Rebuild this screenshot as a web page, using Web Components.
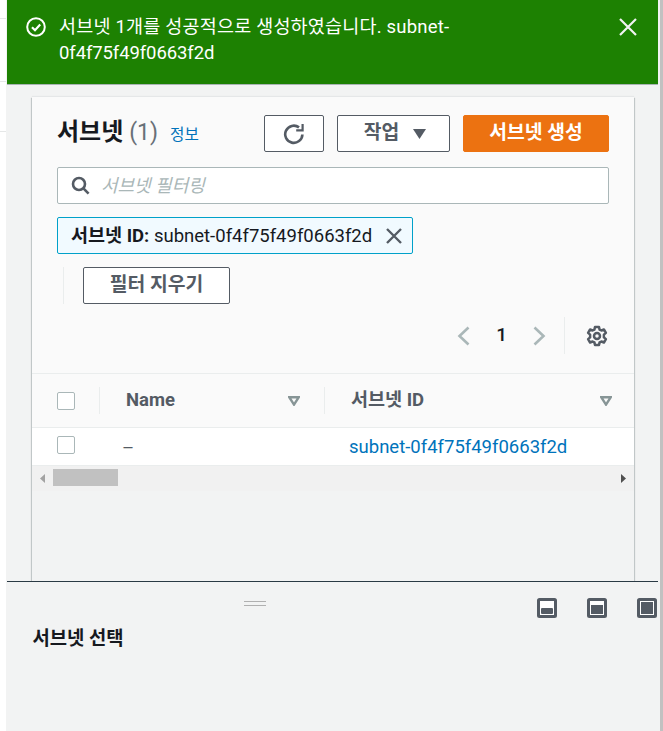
<!DOCTYPE html>
<html lang="ko">
<head>
<meta charset="utf-8">
<style>
  html, body { margin: 0; height: 100%; overflow: hidden; background: #fff; }
  body { font-family: Roboto, "Noto Sans CJK KR", sans-serif; }
</style>
</head>
<body>
<console-page>
  <flash-bar slot="flash">서브넷 1개를 성공적으로 생성하였습니다. subnet-0f4f75f49f0663f2d</flash-bar>
  <subnet-card slot="card"></subnet-card>
  <split-panel slot="split">서브넷 선택</split-panel>
</console-page>

<script>
const FONT = `Roboto, "Noto Sans CJK KR", sans-serif`;

class ConsolePage extends HTMLElement {
  constructor() {
    super();
    this.attachShadow({ mode: 'open' });
    this.shadowRoot.innerHTML = `
      <style>
        :host { display: flex; height: 731px; width: 663px; overflow: hidden; font-family: ${FONT}; }
        .rail { width: 6px; flex: none; background: #fff; display: flex; flex-direction: column; }
        .rail i { display: block; height: 1px; background: #e5e7e7; }
        .rail i:nth-child(1) { margin-top: 18px; }
        .rail i:nth-child(2) { margin-top: 62px; }
        .rail i:nth-child(3) { margin-top: 49px; }
        .main { flex: 1; min-width: 0; display: flex; flex-direction: column; background: #f2f3f3; }
        .content { height: 496px; flex: none; padding: 12px 0 0 26px; box-sizing: border-box; }
        .split { flex: 1; }
        .bar { width: 3px; flex: none; background: #c1c1c1; }
      </style>
      <div class="rail"><i></i><i></i><i></i></div>
      <div class="main">
        <slot name="flash"></slot>
        <div class="content"><slot name="card"></slot></div>
        <div class="split"><slot name="split"></slot></div>
      </div>
      <div class="bar"></div>
    `;
  }
}

class FlashBar extends HTMLElement {
  constructor() {
    super();
    this.attachShadow({ mode: 'open' });
    this.shadowRoot.innerHTML = `
      <style>
        :host { display: flex; height: 85px; box-sizing: border-box; background: #1d8102; color: #fff;
          margin: 0 2px 0 1px; padding: 14px 21px 0 19px; font-size: 18.5px; line-height: 26px; border-bottom: 1px solid #a9b4b4; }
        svg { flex: none; margin: 3px 13px 0 0; }
        .msg { width: 400px; letter-spacing: -.1px; }
        .msg::first-line { letter-spacing: .2px; }
        .close { margin: 4px 0 0 auto; }
      </style>
      <svg width="20" height="20" viewBox="0 0 20 20" fill="none" stroke="#fff" stroke-width="2">
        <circle cx="10" cy="10" r="8.8"/><path d="M6 10.2l3 3 5.2-5.6" stroke-width="2.2"/>
      </svg>
      <div class="msg"><slot></slot></div>
      <svg class="close" width="18" height="18" viewBox="0 0 18 18" fill="none" stroke="#f2f3f3" stroke-width="2.2">
        <path d="M1 1l16 16M17 1L1 17"/>
      </svg>
    `;
  }
}

class AwsButton extends HTMLElement {
  constructor() {
    super();
    this.attachShadow({ mode: 'open' });
    this.shadowRoot.innerHTML = `
      <style>
        :host { display: inline-flex; align-items: center; justify-content: center; box-sizing: border-box;
          height: 37px; border: 1px solid #545b64; border-radius: 2px; background: #fff; color: #545b64;
          font-size: 19.3px; font-weight: 700; white-space: nowrap; }
        :host([primary]) { background: #ec7211; border-color: #ec7211; color: #fff; }
        ::slotted(span) { margin-bottom: 5px; }
      </style>
      <slot></slot>
    `;
  }
}

class SubnetCard extends HTMLElement {
  constructor() {
    super();
    this.attachShadow({ mode: 'open' });
    this.shadowRoot.innerHTML = `
      <style>
        :host { display: block; height: 484px; width: 602px; box-sizing: border-box; background: #f2f3f3;
          box-shadow: 0 1px 1px 0 rgba(0,28,36,.3), 1px 1px 1px 0 rgba(0,28,36,.15), -1px 1px 1px 0 rgba(0,28,36,.15), 0 -1px 1px 0 rgba(0,28,36,.05);
          color: #16191f; overflow: visible; }
        .top { background: #fafafa; padding: 18px 25px 0; height: 277px; box-sizing: border-box; border-bottom: 1px solid #eaeded; }
        .head { display: flex; align-items: flex-start; }
        h1 { margin: 1px 0 0; font-size: 24px; line-height: 33px; font-weight: 700; color: #16191f; }
        h1 span { font-size: 23px; font-weight: 400; color: #687078; }
        .info { font-size: 15.7px; color: #0073bb; margin: 9px 0 0 12px; line-height: 22px; }
        .acts { margin-left: auto; display: flex; gap: 13px; }
        .refresh { width: 60px; }
        .action { width: 113px; gap: 14px; padding-left: 3px; box-sizing: border-box; }
        .create { width: 146px; }
        .filter { display: flex; align-items: center; margin-top: 15px; height: 37px; box-sizing: border-box;
          background: #fff; border: 1px solid #aab7b8; border-radius: 2px; padding: 0 10px 0 13px; width: 552px; }
        .filter em { margin: 0 0 4px 11px; font-size: 18px; color: #aab7b8; font-style: italic; }
        .token { display: inline-flex; align-items: center; margin-top: 13px; height: 37px; box-sizing: border-box;
          background: #f1faff; border: 1px solid #00a1c9; border-radius: 2px; padding: 0 10px 0 13px; font-size: 18.5px; color: #16191f; white-space: pre; }
        .token span { margin-bottom: 4px; }
        .token svg { margin: 0 0 0 14px; }
        .clear-row { display: flex; margin: 13px 0 0 6px; }
        .clear-row .rule { width: 1px; background: #eaeded; margin-right: 19px; }
        .clear { width: 147px; }
        .pager { display: flex; align-items: center; justify-content: flex-end; margin-top: 13px; height: 37px; }
        .pager .num { font-size: 19px; font-weight: 500; color: #16191f; margin: 0 26px 2px 26px; }
        .pager .rule { width: 1px; height: 37px; background: #eaeded; margin: 0 21px 0 18px; }
        .thead, .row { display: grid; grid-template-columns: 67px 225px 1fr; }
        .thead { height: 54px; background: #fafafa; border-bottom: 1px solid #eaeded; box-sizing: border-box;
          align-items: center; font-size: 18.5px; font-weight: 700; color: #545b64; }
        .row { height: 38px; background: #fff; align-items: center; font-size: 18.5px; box-sizing: border-box; border-bottom: 1px solid #eaeded; }
        .cell { display: flex; align-items: center; height: 27px; box-sizing: border-box; padding-left: 25px; }
        .cb { width: 18px; height: 18px; box-sizing: border-box; background: #fff; border: 1px solid #aab7b8; border-radius: 2px; }
        .thead .cell + .cell { border-left: 1px solid #eaeded; padding-left: 26px; }
        .thead .name-label { margin-bottom: 2px; }
        .thead .id-label { margin-bottom: 5px; }
        .thead .sort { margin-left: auto; margin-right: 24px; }
        .thead .id .sort { margin-right: 22px; }
        .row .cell + .cell { padding-left: 25px; }
        .row .first { margin-top: -3px; }
        .row .dash { margin: 2px 0 0 -2px; color: #545b64; }
        a { color: #0073bb; text-decoration: none; }
        .scroll { display: flex; height: 25px; background: #f1f1f1; align-items: center; position: relative; }
        .scroll .thumb { position: absolute; left: 21px; top: 3px; width: 65px; height: 17px; background: #c1c1c1; }
        .scroll svg { position: absolute; top: 8px; }
      </style>
      <div class="top">
        <div class="head">
          <h1>서브넷 <span>(1)</span></h1>
          <div class="info">정보</div>
          <div class="acts">
            <aws-button class="refresh">
              <svg width="22" height="22" viewBox="0 0 22 22" fill="none" stroke="#545b64" stroke-width="2.6" style="display:block">
                <path d="M19.4 11.5A8.6 8.6 0 1 1 16 4.4"/><path d="M19.6 1v6.4h-6.4" stroke-width="2.2"/>
              </svg>
            </aws-button>
            <aws-button class="action"><span>작업</span>
              <svg width="13" height="10" viewBox="0 0 13 10" style="display:block"><path d="M0 0h13L6.5 10z" fill="#545b64"/></svg>
            </aws-button>
            <aws-button class="create" primary><span>서브넷 생성</span></aws-button>
          </div>
        </div>
        <div class="filter">
          <svg width="19" height="19" viewBox="0 0 19 19" fill="none" stroke="#545b64" stroke-width="2.6"><circle cx="8" cy="8" r="6"/><path d="M12.4 12.4l5.2 5.2"/></svg>
          <em>서브넷 필터링</em>
        </div>
        <div class="token"><span><b>서브넷 ID:</b> subnet-0f4f75f49f0663f2d</span><svg width="16" height="16" viewBox="0 0 16 16" fill="none" stroke="#545b64" stroke-width="2.4"><path d="M1 1l14 14M15 1L1 15"/></svg></div>
        <div class="clear-row"><span class="rule"></span><aws-button class="clear"><span>필터 지우기</span></aws-button></div>
        <div class="pager">
          <svg width="13" height="20" viewBox="0 0 13 20" fill="none" stroke="#aab7b8" stroke-width="2.6"><path d="M11.5 1.5L2.5 10l9 8.5"/></svg>
          <span class="num">1</span>
          <svg width="13" height="20" viewBox="0 0 13 20" fill="none" stroke="#aab7b8" stroke-width="2.6"><path d="M1.5 1.5l9 8.5-9 8.5"/></svg>
          <span class="rule"></span>
          <svg width="22" height="22" viewBox="0 0 22 22" fill="none" stroke="#545b64" stroke-width="2.5" stroke-linejoin="round" style="margin-right:1px">
            <path d="M9 2h4l.6 2.6 1.8.9 2.5-1 2 3.4-2 1.7v2.8l2 1.7-2 3.4-2.5-1-1.8.9L13 20H9l-.6-2.6-1.8-.9-2.5 1-2-3.4 2-1.7V9.6l-2-1.7 2-3.4 2.5 1 1.8-.9z"/><circle cx="11" cy="11" r="3"/>
          </svg>
        </div>
      </div>
      <div class="thead">
        <div class="cell"><span class="cb"></span></div>
        <div class="cell"><span class="name-label">Name</span>
          <svg class="sort" width="12" height="10" viewBox="0 0 12 10" fill="none" stroke="#879596" stroke-width="2.4"><path d="M1.2 1.2h9.6L6 8.6z"/></svg>
        </div>
        <div class="cell id"><span class="id-label">서브넷 ID</span>
          <svg class="sort" width="12" height="10" viewBox="0 0 12 10" fill="none" stroke="#879596" stroke-width="2.4"><path d="M1.2 1.2h9.6L6 8.6z"/></svg>
        </div>
      </div>
      <div class="row">
        <div class="cell first"><span class="cb"></span></div>
        <div class="cell"><span class="dash">–</span></div>
        <div class="cell"><a href="#">subnet-0f4f75f49f0663f2d</a></div>
      </div>
      <div class="scroll">
        <svg style="left:8px" width="5" height="9" viewBox="0 0 5 9"><path d="M5 0v9L0 4.5z" fill="#a3a3a3"/></svg>
        <span class="thumb"></span>
        <svg style="right:8px" width="5" height="9" viewBox="0 0 5 9"><path d="M0 0v9l5-4.5z" fill="#505050"/></svg>
      </div>
    `;
  }
}

class SplitPanel extends HTMLElement {
  constructor() {
    super();
    this.attachShadow({ mode: 'open' });
    this.shadowRoot.innerHTML = `
      <style>
        :host { display: block; height: 100%; box-sizing: border-box; background: #f2f3f3; position: relative; padding: 46px 0 0 26.5px; }
        :host::before { content: ""; position: absolute; top: 0; left: 1px; right: 2px; height: 1px; background: #2a3a44; }
        .title { font-size: 18.8px; font-weight: 700; color: #16191f; line-height: 24px; }
        .grip { position: absolute; left: 238px; top: 20px; width: 22px; height: 3px; border-top: 1px solid #b0b0b0; border-bottom: 1px solid #b0b0b0; }
        .modes { position: absolute; top: 17px; right: 3px; display: flex; gap: 30px; }
        .modes svg { display: block; }
      </style>
      <span class="grip"></span>
      <div class="modes">
        <svg width="20" height="20" viewBox="0 0 20 20"><rect x="1.5" y="1.5" width="17" height="17" rx="1" fill="#fff" stroke="#545b64" stroke-width="3"/><rect x="4" y="10" width="12" height="6" rx="1" fill="#545b64"/></svg>
        <svg width="20" height="20" viewBox="0 0 20 20"><rect x="1.5" y="1.5" width="17" height="17" rx="1" fill="#fff" stroke="#545b64" stroke-width="3"/><rect x="4" y="7" width="12" height="9" fill="#545b64"/></svg>
        <svg width="20" height="20" viewBox="0 0 20 20"><rect x="1.5" y="1.5" width="17" height="17" rx="1" fill="#fff" stroke="#545b64" stroke-width="3"/><rect x="4" y="4" width="12" height="12" fill="#545b64"/></svg>
      </div>
      <div class="title"><slot></slot></div>
    `;
  }
}

customElements.define('aws-button', AwsButton);
customElements.define('flash-bar', FlashBar);
customElements.define('subnet-card', SubnetCard);
customElements.define('split-panel', SplitPanel);
customElements.define('console-page', ConsolePage);
</script>
</body>
</html>
